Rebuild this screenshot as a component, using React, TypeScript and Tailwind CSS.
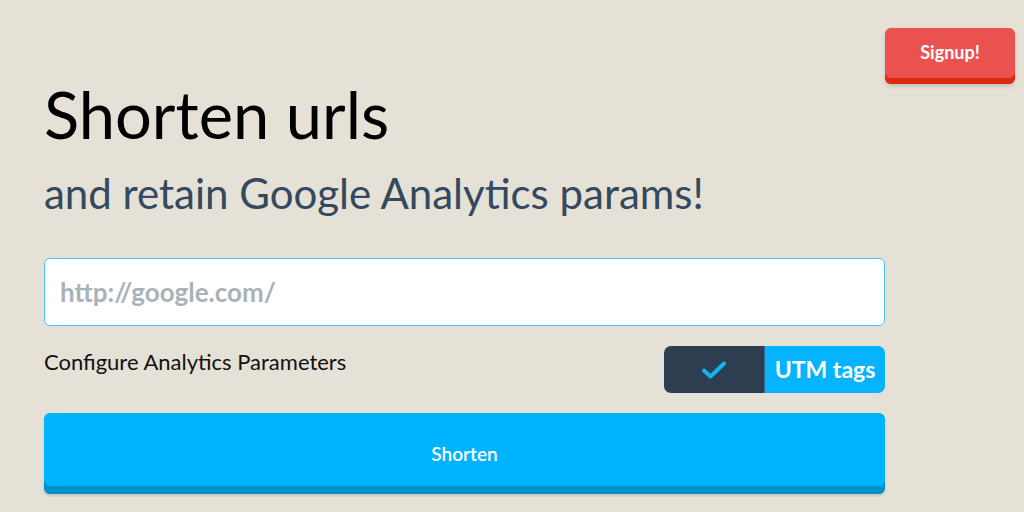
import { useState } from 'react';

export default function App() {
  const [url, setUrl] = useState('');
  const [utm, setUtm] = useState(true);

  return (
    <div className="relative h-[512px] w-[1024px] overflow-hidden bg-[#e5e1d6]" style={{ fontFamily: 'Lato, "Open Sans", sans-serif' }}>
      <button className="absolute left-[885px] top-[28px] h-[56px] w-[130px] rounded-[6px] bg-[#e9524e] text-[18px] font-bold text-white shadow-[inset_0_-6px_0_#dc2a12,0_2px_4px_rgba(0,0,0,0.15)]">
        <span className="relative -top-[4px]">Signup!</span>
      </button>

      <div className="ml-[44px] w-[841px] pt-[74px]">
        <h1 className="text-[65px] leading-[80px] text-black">Shorten urls</h1>
        <h2 className="mt-[14px] text-[42px] leading-[50px] text-[#34495e]">and retain Google Analytics params!</h2>

        <input
          value={url}
          onChange={(e) => setUrl(e.target.value)}
          placeholder="http://google.com/"
          className="mt-[40px] h-[68px] w-full rounded-[6px] border border-[#47c2f6] bg-white px-[15px] text-[26px] font-bold text-[#34495e] outline-none placeholder:text-[#a8b3b9]"
        />

        <div className="mt-[20px] flex items-center justify-between">
          <span className="-mt-[17px] text-[22px] text-[#111]">Configure Analytics Parameters</span>
          <button onClick={() => setUtm(!utm)} className="flex h-[47px] w-[221px] overflow-hidden rounded-[7px]">
            <span className="flex h-full w-[100px] items-center justify-center bg-[#2c3e50]">
              {utm && (
                <svg width="26" height="20" viewBox="0 0 26 20" fill="none">
                  <path d="M3 10.5l6.5 6L23 3.5" stroke="#12b3f5" strokeWidth="4" strokeLinecap="round" strokeLinejoin="round" />
                </svg>
              )}
            </span>
            <span className="flex h-full flex-1 items-center justify-center border-l border-[#3d6a86] bg-[#05b3ff] text-[23px] font-bold text-white">UTM tags</span>
          </button>
        </div>

        <button className="mt-[20px] h-[81px] w-full rounded-[6px] bg-[#00b3ff] text-[19px] font-semibold text-white shadow-[inset_0_-8px_0_#0092cf,0_2px_3px_rgba(0,0,0,0.12)]">
          <span className="relative top-[1px]">Shorten</span>
        </button>
      </div>
    </div>
  );
}
